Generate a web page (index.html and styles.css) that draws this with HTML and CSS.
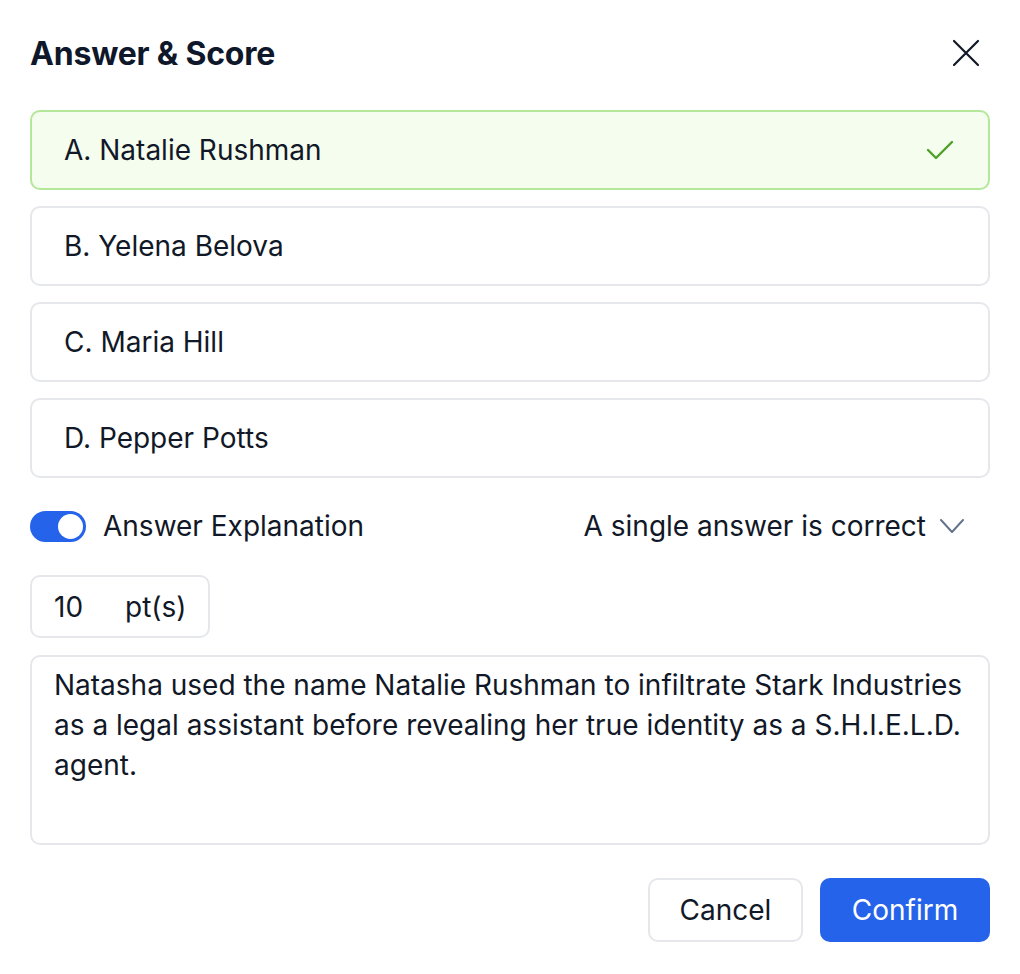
FILE: index.html
```html
<!DOCTYPE html>
<html lang="en">
<head>
<meta charset="utf-8">
<title>Answer &amp; Score</title>
<link rel="stylesheet" href="styles.css">
</head>
<body>
<div class="dialog">
  <div class="header">
    <h1 class="title">Answer &amp; Score</h1>
    <button class="close" aria-label="Close">
      <svg width="28" height="28" viewBox="0 0 28 28" fill="none" stroke="#111827" stroke-width="2.2" stroke-linecap="round"><path d="M2 2L26 26M26 2L2 26"/></svg>
    </button>
  </div>
  <div class="options">
    <div class="option correct">
      <span>A. Natalie Rushman</span>
      <svg class="check" width="28" height="22" viewBox="0 0 28 22" fill="none" stroke="#4ea12a" stroke-width="2.4" stroke-linecap="round" stroke-linejoin="round"><path d="M2 11L10 19L26 3"/></svg>
    </div>
    <div class="option"><span>B. Yelena Belova</span></div>
    <div class="option"><span>C. Maria Hill</span></div>
    <div class="option"><span>D. Pepper Potts</span></div>
  </div>
  <div class="settings">
    <div class="toggle-wrap">
      <span class="toggle"><span class="knob"></span></span>
      <span class="label">Answer Explanation</span>
    </div>
    <div class="select">
      <span>A single answer is correct</span>
      <svg width="24" height="14" viewBox="0 0 24 14" fill="none" stroke="#64748b" stroke-width="2" stroke-linecap="round" stroke-linejoin="round"><path d="M1 1L12 13L23 1"/></svg>
    </div>
  </div>
  <div class="points">
    <span class="num">10</span>
    <span class="unit">pt(s)</span>
  </div>
  <div class="explanation">Natasha used the name Natalie Rushman to infiltrate Stark Industries as a legal assistant before revealing her true identity as a S.H.I.E.L.D. agent.</div>
  <div class="actions">
    <button class="btn cancel">Cancel</button>
    <button class="btn confirm">Confirm</button>
  </div>
</div>
</body>
</html>
```

FILE: styles.css
```css
* { box-sizing: border-box; }
html, body { margin: 0; padding: 0; background: #ffffff; }
body {
  font-family: Inter, "Noto Sans", "Liberation Sans", sans-serif;
  color: #111827;
}
.dialog {
  width: 1020px;
  padding: 30px 30px 32px 30px;
}
.header {
  display: flex;
  align-items: center;
  justify-content: space-between;
  height: 46px;
}
.title {
  margin: 0;
  font-size: 32px;
  font-weight: 700;
  color: #0f172a;
  letter-spacing: -0.2px;
}
.close {
  border: none;
  background: none;
  padding: 0;
  margin-right: 10px;
  width: 28px;
  height: 28px;
  display: flex;
  cursor: pointer;
}
.options {
  margin-top: 34px;
  display: flex;
  flex-direction: column;
  gap: 16px;
}
.option {
  height: 80px;
  border: 2px solid #e5e7eb;
  border-radius: 10px;
  padding: 0 34px 0 32px;
  display: flex;
  align-items: center;
  justify-content: space-between;
  font-size: 28px;
  color: #111827;
}
.option.correct {
  border-color: #b4e79a;
  background: #f5fdef;
}
.settings {
  margin-top: 32px;
  height: 32px;
  display: flex;
  align-items: center;
  justify-content: space-between;
}
.toggle-wrap {
  display: flex;
  align-items: center;
  gap: 17px;
}
.toggle {
  width: 56px;
  height: 31px;
  border-radius: 16px;
  background: #2563eb;
  display: flex;
  align-items: center;
  justify-content: flex-end;
  padding-right: 3px;
}
.knob {
  width: 25px;
  height: 25px;
  border-radius: 50%;
  background: #ffffff;
}
.label, .select span {
  font-size: 28px;
  color: #111827;
}
.select {
  display: flex;
  align-items: center;
  gap: 14px;
  margin-right: 26px;
}
.points {
  margin-top: 33px;
  width: 180px;
  height: 63px;
  border: 2px solid #e5e7eb;
  border-radius: 10px;
  display: flex;
  align-items: center;
  padding-left: 22px;
  font-size: 28px;
}
.num { width: 71px; }
.explanation {
  margin-top: 17px;
  height: 190px;
  border: 2px solid #e5e7eb;
  border-radius: 10px;
  padding: 8px 22px;
  font-size: 28px;
  line-height: 40px;
  color: #111827;
}
.actions {
  margin-top: 33px;
  display: flex;
  justify-content: flex-end;
  gap: 17px;
}
.btn {
  height: 64px;
  border-radius: 10px;
  font-family: inherit;
  font-size: 28px;
  padding: 0;
  cursor: pointer;
}
.cancel {
  width: 155px;
  background: #ffffff;
  border: 2px solid #e5e7eb;
  color: #111827;
}
.confirm {
  width: 170px;
  background: #2563eb;
  border: none;
  color: #ffffff;
}
```
